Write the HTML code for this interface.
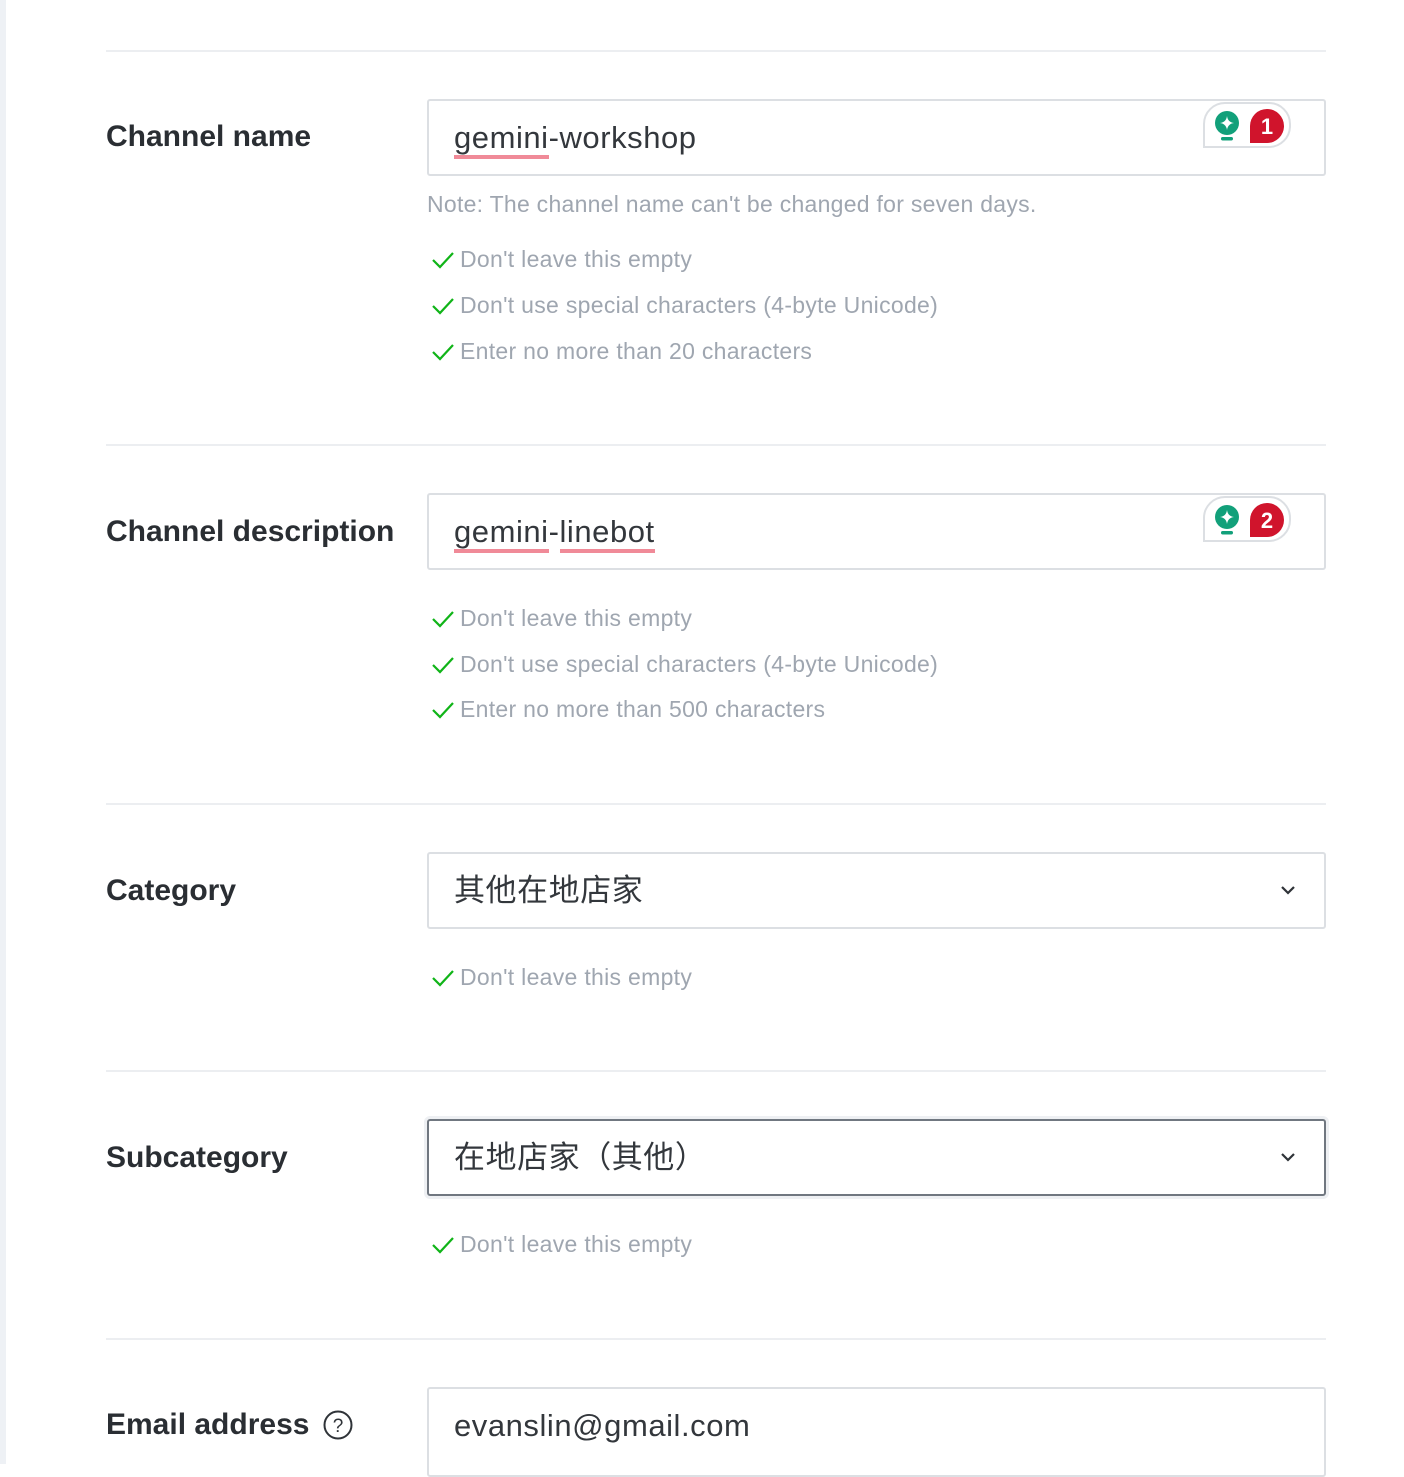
<!DOCTYPE html>
<html><head><meta charset="utf-8"><style>
*{margin:0;padding:0;box-sizing:border-box}
body{width:1404px;height:1464px;background:#fff;position:relative;overflow:hidden;font-family:"Liberation Sans","Noto Sans CJK TC",sans-serif;color:#2f3338}
.edge{position:absolute;left:0;top:0;width:6px;height:1464px;background:#eef1f5}
.hr{position:absolute;left:106px;width:1220px;height:2px;background:#eceef1}
.lbl{position:absolute;left:106px;font-size:30px;font-weight:bold;color:#2a2e33;line-height:40px}
.inp{position:absolute;left:427px;width:899px;height:77px;border:2px solid #dcdfe3;border-radius:3px}
.inp .t{position:absolute;left:25px;top:0;line-height:73px;font-size:31px;color:#33373c;letter-spacing:0.55px}
.inp.dark{border-color:#707780;box-shadow:0 0 0 3px #eef0f3}
.hint{position:absolute;left:431px;font-size:23px;color:#9fa6b0;line-height:30px;white-space:nowrap;letter-spacing:0.3px}
.hint svg{vertical-align:-3px;margin-right:5px}
.note{position:absolute;left:427px;font-size:23px;color:#9fa6b0;line-height:30px;letter-spacing:0.27px}
.ul{border-bottom:4px solid #f08a98;padding-bottom:0}
.badge{position:absolute;left:774px;top:1px;width:88px;height:46px;border:2px solid #dcdfe3;border-top-left-radius:22px;border-top-right-radius:22px;border-bottom-right-radius:22px;background:#fff}
.chev{position:absolute;right:28px;top:30px}
</style></head><body>
<div class="edge"></div>
<div class="hr" style="top:50px"></div>
<div class="hr" style="top:444px"></div>
<div class="hr" style="top:803px"></div>
<div class="hr" style="top:1070px"></div>
<div class="hr" style="top:1338px"></div>

<div class="lbl" style="top:117px">Channel name</div>
<div class="inp" style="top:99px"><div class="t"><span class="ul">gemini</span>-workshop</div>
<div class="badge"><svg width="84" height="42" viewBox="0 0 84 42" style="position:absolute;left:0;top:0">
<circle cx="22" cy="19" r="12" fill="#12a07a"/><path d="M22 12 Q22.8 18.2 29 19 Q22.8 19.8 22 26 Q21.2 19.8 15 19 Q21.2 18.2 22 12Z" fill="#fff"/><rect x="16" y="33" width="12" height="3.5" rx="1.7" fill="#12a07a"/>
<path d="M45 22 a17 17 0 0 1 17 -17 a17 17 0 1 1 0 34 H45Z" fill="#d0142c"/>
<text x="62" y="30" font-family="Liberation Sans" font-weight="bold" font-size="22" fill="#fff" text-anchor="middle">1</text></svg></div></div>
<div class="note" style="top:189px">Note: The channel name can't be changed for seven days.</div>
<div class="hint" style="top:244px"><svg width="24" height="20"><path d="M2 10 L9 17 L22 3" stroke="#10b418" stroke-width="2.2" fill="none"/></svg>Don't leave this empty</div>
<div class="hint" style="top:290px"><svg width="24" height="20"><path d="M2 10 L9 17 L22 3" stroke="#10b418" stroke-width="2.2" fill="none"/></svg>Don't use special characters (4-byte Unicode)</div>
<div class="hint" style="top:336px"><svg width="24" height="20"><path d="M2 10 L9 17 L22 3" stroke="#10b418" stroke-width="2.2" fill="none"/></svg>Enter no more than 20 characters</div>

<div class="lbl" style="top:512px">Channel description</div>
<div class="inp" style="top:493px"><div class="t"><span class="ul">gemini</span>-<span class="ul">linebot</span></div>
<div class="badge"><svg width="84" height="42" viewBox="0 0 84 42" style="position:absolute;left:0;top:0">
<circle cx="22" cy="19" r="12" fill="#12a07a"/><path d="M22 12 Q22.8 18.2 29 19 Q22.8 19.8 22 26 Q21.2 19.8 15 19 Q21.2 18.2 22 12Z" fill="#fff"/><rect x="16" y="33" width="12" height="3.5" rx="1.7" fill="#12a07a"/>
<path d="M45 22 a17 17 0 0 1 17 -17 a17 17 0 1 1 0 34 H45Z" fill="#d0142c"/>
<text x="62" y="30" font-family="Liberation Sans" font-weight="bold" font-size="22" fill="#fff" text-anchor="middle">2</text></svg></div></div>
<div class="hint" style="top:603px"><svg width="24" height="20"><path d="M2 10 L9 17 L22 3" stroke="#10b418" stroke-width="2.2" fill="none"/></svg>Don't leave this empty</div>
<div class="hint" style="top:649px"><svg width="24" height="20"><path d="M2 10 L9 17 L22 3" stroke="#10b418" stroke-width="2.2" fill="none"/></svg>Don't use special characters (4-byte Unicode)</div>
<div class="hint" style="top:694px"><svg width="24" height="20"><path d="M2 10 L9 17 L22 3" stroke="#10b418" stroke-width="2.2" fill="none"/></svg>Enter no more than 500 characters</div>

<div class="lbl" style="top:871px">Category</div>
<div class="inp" style="top:852px"><div class="t">其他在地店家</div>
<svg class="chev" width="16" height="12"><path d="M2 3 L8 9 L14 3" stroke="#2f3338" stroke-width="2.2" fill="none"/></svg></div>
<div class="hint" style="top:962px"><svg width="24" height="20"><path d="M2 10 L9 17 L22 3" stroke="#10b418" stroke-width="2.2" fill="none"/></svg>Don't leave this empty</div>

<div class="lbl" style="top:1138px">Subcategory</div>
<div class="inp dark" style="top:1119px"><div class="t">在地店家（其他）</div>
<svg class="chev" width="16" height="12"><path d="M2 3 L8 9 L14 3" stroke="#2f3338" stroke-width="2.2" fill="none"/></svg></div>
<div class="hint" style="top:1229px"><svg width="24" height="20"><path d="M2 10 L9 17 L22 3" stroke="#10b418" stroke-width="2.2" fill="none"/></svg>Don't leave this empty</div>

<div class="lbl" style="top:1405px">Email address</div>
<svg style="position:absolute;left:322px;top:1409px" width="32" height="32"><circle cx="16" cy="16" r="13.5" stroke="#2f3338" stroke-width="2" fill="none"/><text x="16" y="23" font-family="Liberation Sans" font-size="19" fill="#2f3338" text-anchor="middle">?</text></svg>
<div class="inp" style="top:1387px;height:90px"><div class="t">evanslin@gmail.com</div></div>
</body></html>
